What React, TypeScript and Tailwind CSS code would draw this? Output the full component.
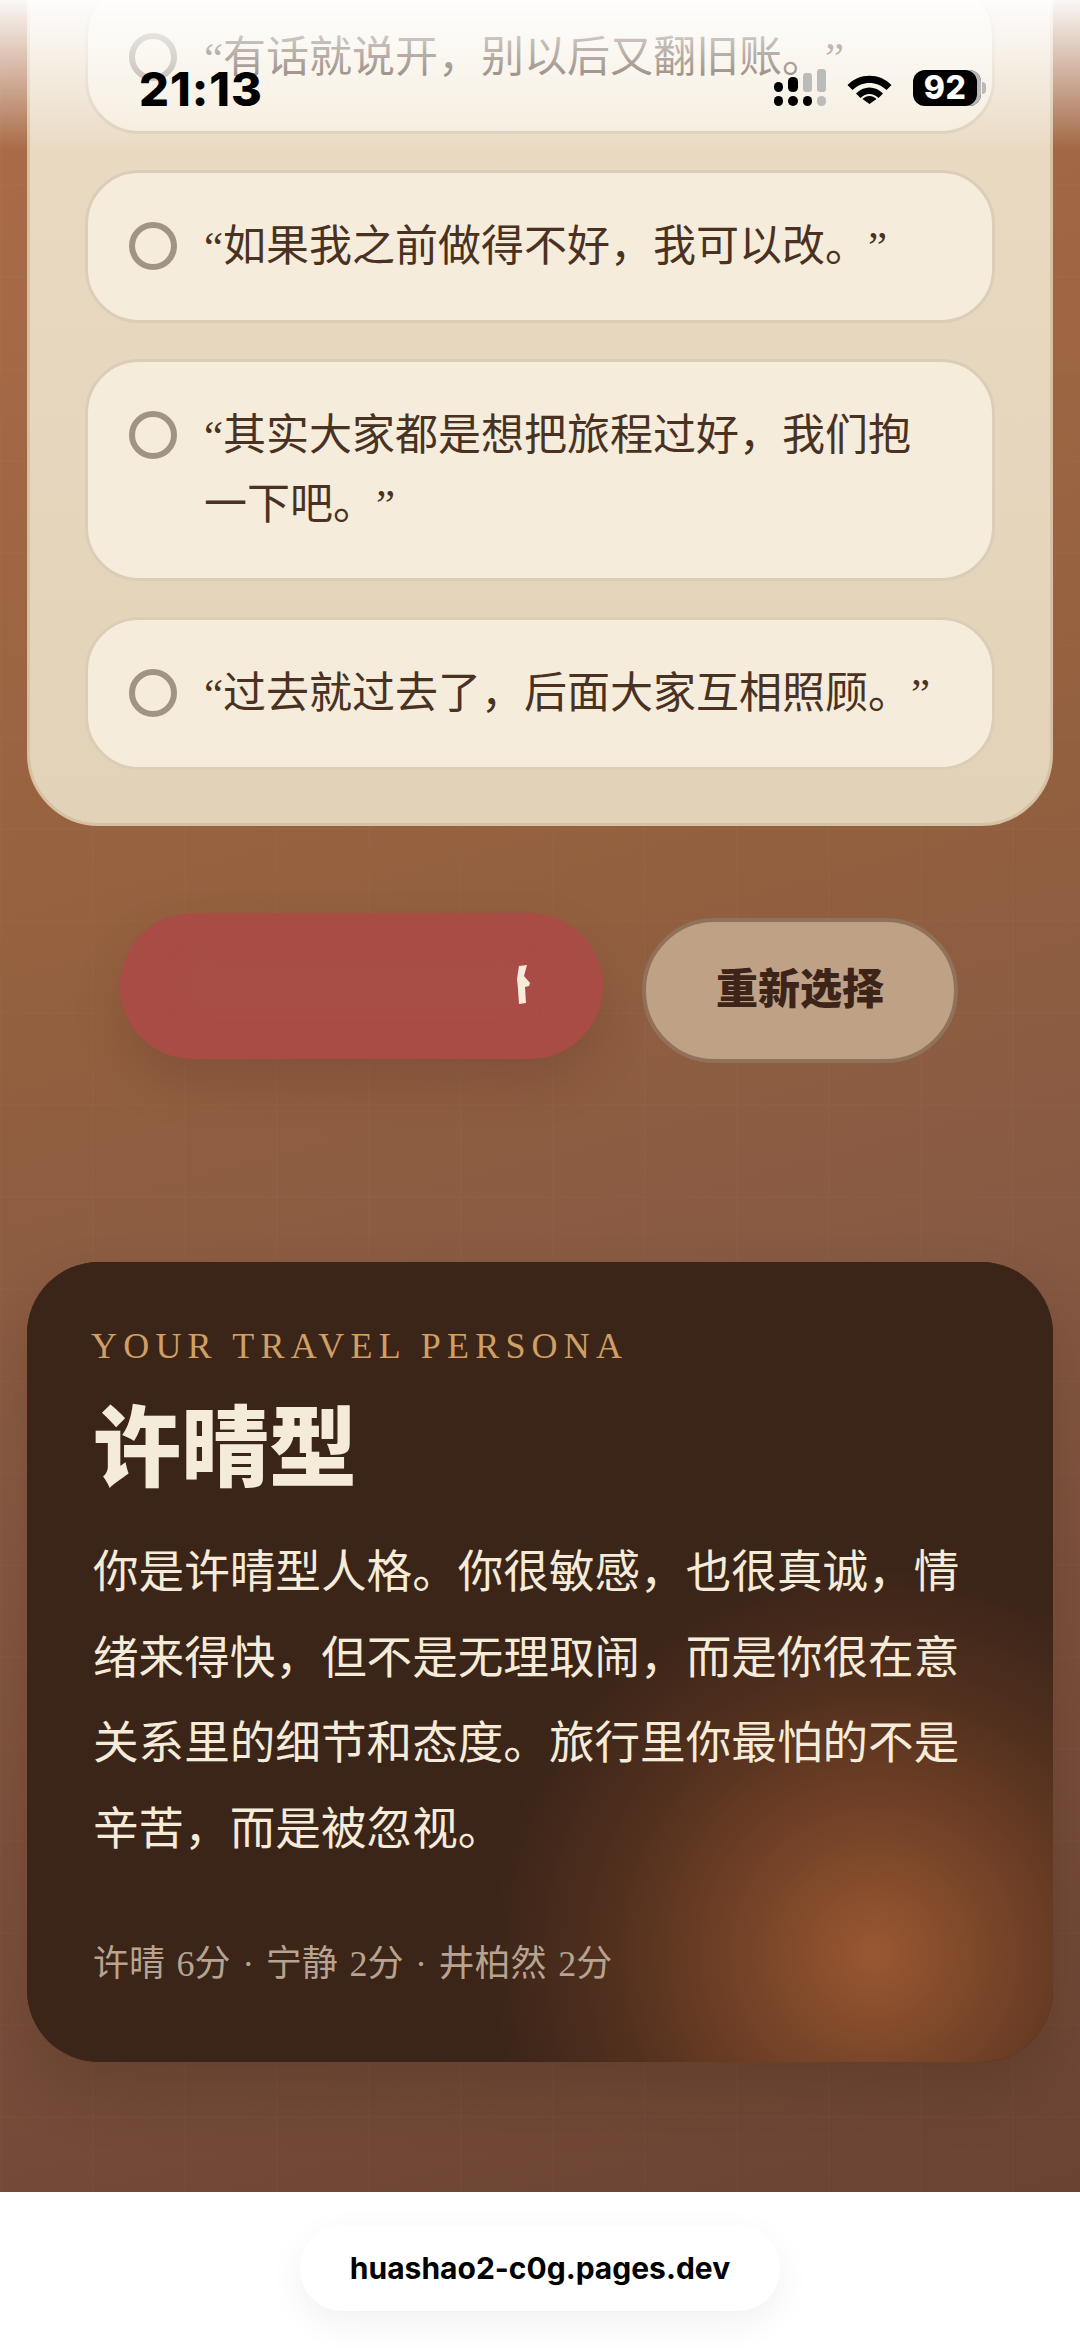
const OPTIONS = [
  "“有话就说开，别以后又翻旧账。”",
  "“如果我之前做得不好，我可以改。”",
  "“其实大家都是想把旅程过好，我们抱一下吧。”",
  "“过去就过去了，后面大家互相照顾。”",
];

function Option({ text }: { text: string }) {
  return (
    <div className="flex items-start gap-[27px] rounded-[54px] border-[3px] border-[#dbcdb8] bg-[#f5ecdc] pl-[41px] pr-[53px] py-[39px]">
      <span className="mt-[10px] size-[48px] shrink-0 rounded-full border-[6px] border-[#a09484]" />
      <span className="text-[43px] leading-[69px] text-[#4a3222] [text-spacing-trim:space-all]">{text}</span>
    </div>
  );
}

function StatusIcons() {
  return (
    <div className="flex items-start">
      <svg width="54" height="38" viewBox="0 0 54 38" className="mt-[-1px]">
        <rect x="0" y="13" width="9" height="10" rx="4.5" fill="#000" />
        <rect x="0" y="27" width="9" height="10" rx="4.5" fill="#000" />
        <rect x="14" y="8" width="10" height="15" rx="4.5" fill="#000" />
        <rect x="14" y="27" width="10" height="10" rx="5" fill="#000" />
        <rect x="29" y="4" width="9" height="19" rx="3" fill="#bbb" />
        <rect x="29" y="27" width="9" height="10" rx="4.5" fill="#000" />
        <rect x="43" y="0" width="9" height="23" rx="3" fill="#bbb" />
        <rect x="43" y="27" width="9" height="10" rx="4.5" fill="#bbb" />
      </svg>
      <svg width="47" height="32" viewBox="0 0 47 32" className="ml-[18px] mt-[2px]">
        <path d="M1.5 13C13 0.5 34 0.5 45.5 13L40.5 18C31 8.5 16 8.5 6.5 18Z" fill="#000" />
        <path d="M10 21.5C17.5 13.5 29.5 13.5 37 21.5L32.5 26C27 20.5 20 20.5 14.5 26Z" fill="#000" />
        <path d="M16.5 27C20.5 23 26.5 23 30.5 27L23.5 32Z" fill="#000" />
      </svg>
      <div className="ml-[20px] flex h-[36px] w-[68px] items-center justify-center rounded-[12px] bg-[#000] pr-[4px] text-[32px] font-extrabold leading-none tracking-[0.5px] text-white shadow-[inset_-4px_0_0_#b9b9b9]">
        92
      </div>
      <span className="ml-[1px] mt-[12px] h-[12px] w-[4px] rounded-r-full bg-[#b9b9b9]" />
    </div>
  );
}

export default function App() {
  return (
    <div
      lang="zh-CN"
      className="relative flex h-[2348px] w-[1080px] flex-col overflow-hidden bg-white font-['Liberation_Serif','Noto_Sans_CJK_SC',serif]"
    >
      <main className="flex h-[2192px] shrink-0 flex-col bg-[linear-gradient(rgba(255,255,255,0.012)_2px,transparent_2px),linear-gradient(90deg,rgba(255,255,255,0.012)_2px,transparent_2px),linear-gradient(165deg,#ad6d48_0%,#93603f_42%,#875a43_60%,#6b4333_100%)] bg-[size:92px_92px,92px_92px,100%_100%] px-[27px]">
        <section className="mt-[-77px] flex flex-col gap-[36px] rounded-[72px] border-[3px] border-[#d6c1a3] bg-[linear-gradient(180deg,#ecdcc6_0%,#e2d2b7_100%)] px-[55px] pb-[53px] pt-[55px]">
          {OPTIONS.map((text) => (
            <Option key={text} text={text} />
          ))}
        </section>

        <div className="mt-[87px] flex items-start justify-center gap-[39px] pr-[2px]">
          <button
            type="button"
            aria-label="提交"
            className="relative h-[146px] w-[483px] rounded-full bg-[#a94c46] shadow-[0_24px_48px_rgba(70,30,20,0.18)]"
          >
            <span className="absolute left-[70px] top-[50px] h-[44px] w-[330px] bg-[#a94e47] blur-[10px]" />
            <svg width="16" height="40" viewBox="0 0 16 40" className="absolute left-[396px] top-[52px]">
              <path d="M3 1 11 0 8 11 14 18 13 21 9 22 10 38 3 39 2 24 1 14Z" fill="#f9ebdc" />
            </svg>
          </button>
          <button
            type="button"
            className="mt-[5px] h-[145px] w-[316px] rounded-full border-[4px] border-[#8f7259] bg-[#bfa186] text-[42px] font-black text-[#3d2418]"
          >
            重新选择
          </button>
        </div>

        <section className="relative mt-[199px] h-[800px] overflow-hidden rounded-[72px] bg-[#3b2519] px-[66px] pt-[64px] shadow-[0_30px_60px_rgba(40,20,10,0.18)]">
          <div className="absolute inset-0 bg-[radial-gradient(circle_385px_at_848px_691px,#99583200_-1%,#995832_0%,#774428_32%,#52301e_68%,#3b2519_100%)]" />
          <div className="relative">
            <div className="ml-[-2px] text-[36px] leading-[40px] tracking-[6.2px] text-[#cf9f63]">YOUR TRAVEL PERSONA</div>
            <h1 className="mt-[29px] text-[88px] font-black leading-[110px] text-[#f5ebd9]">许晴型</h1>
            <p className="mt-[25px] text-[45.6px] leading-[85.5px] text-[#f5ebd9] [text-spacing-trim:space-all]">
              你是许晴型人格。你很敏感，也很真诚，情绪来得快，但不是无理取闹，而是你很在意关系里的细节和态度。旅行里你最怕的不是辛苦，而是被忽视。
            </p>
            <div className="mt-[67px] text-[36px] leading-[50px] text-[#b7a390] [word-spacing:2.6px]">许晴 6分 · 宁静 2分 · 井柏然 2分</div>
          </div>
        </section>
      </main>

      <footer className="flex flex-1 items-start justify-center bg-white pt-[33px]">
        <div className="flex h-[86px] w-[480px] items-center justify-center rounded-[42px] bg-white font-['Inter',sans-serif] text-[30px] font-bold text-black shadow-[0_12px_36px_rgba(0,0,0,0.06)]">
          huashao2-c0g.pages.dev
        </div>
      </footer>

      <div className="absolute inset-x-0 top-0 h-[150px] bg-[linear-gradient(180deg,rgba(255,255,255,0.95)_0%,rgba(255,255,255,0)_100%)]" />

      <div className="absolute left-[139px] right-[94px] top-[65px] flex items-start justify-between font-['Inter',sans-serif] text-black">
        <span className="text-[47px] font-extrabold leading-[48px] tracking-[1px]">21:13</span>
        <div className="pt-[5px]">
          <StatusIcons />
        </div>
      </div>
    </div>
  );
}
